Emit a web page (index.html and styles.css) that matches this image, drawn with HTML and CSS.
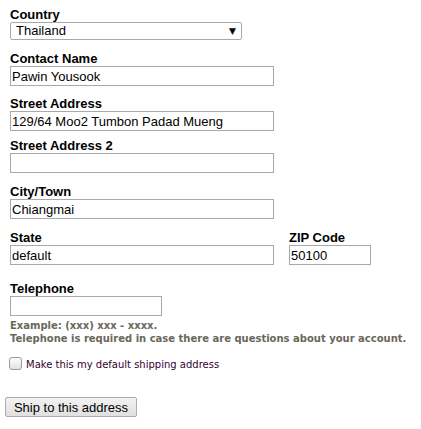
FILE: index.html
```html
<!DOCTYPE html>
<html>
<head>
<meta charset="utf-8">
<link rel="stylesheet" href="styles.css">
</head>
<body>
<form class="form">
  <div class="field">
    <label class="lbl">Country</label>
    <div class="select"><span>Thailand</span><span class="arrow">&#9660;</span></div>
  </div>
  <div class="field f-contact">
    <label class="lbl">Contact Name</label>
    <input class="txt" type="text" value="Pawin Yousook">
  </div>
  <div class="field f-street">
    <label class="lbl">Street Address</label>
    <input class="txt" type="text" value="129/64 Moo2 Tumbon Padad Mueng">
  </div>
  <div class="field f-street2">
    <label class="lbl">Street Address 2</label>
    <input class="txt" type="text" value="">
  </div>
  <div class="field f-city">
    <label class="lbl">City/Town</label>
    <input class="txt" type="text" value="Chiangmai">
  </div>
  <div class="row f-state">
    <div class="col">
      <label class="lbl">State</label>
      <input class="txt" type="text" value="default">
    </div>
    <div class="col">
      <label class="lbl">ZIP Code</label>
      <input class="txt zip" type="text" value="50100">
    </div>
  </div>
  <div class="field f-tel">
    <label class="lbl">Telephone</label>
    <input class="txt tel" type="text" value="">
    <p class="hint">Example: (xxx) xxx - xxxx.<br>Telephone is required in case there are questions about your account.</p>
  </div>
  <label class="check"><span class="box"></span><span class="check-text">Make this my default shipping address</span></label>
  <div class="actions">
    <button type="button" class="btn">Ship to this address</button>
  </div>
</form>
</body>
</html>
```
FILE: styles.css
```css
html, body {
  margin: 0;
  padding: 0;
  background: #fff;
}
.form {
  padding: 8px 0 0 5px;
  font-family: "Liberation Sans", Arial, sans-serif;
  color: #000;
}
.field {
  padding-left: 5px;
}
.lbl {
  display: block;
  font-weight: bold;
  font-size: 13px;
  line-height: 14px;
  height: 14px;
  color: #000;
}
.select {
  box-sizing: border-box;
  width: 232px;
  height: 18px;
  border: 1px solid #a9a9a9;
  border-radius: 2px;
  display: flex;
  align-items: center;
  justify-content: space-between;
  padding: 0 5px 0 5px;
  font-size: 13px;
  line-height: 16px;
  color: #000;
}
.arrow {
  font-family: "DejaVu Sans", sans-serif;
  font-size: 9px;
  line-height: 10px;
  color: #000;
}
.txt {
  display: block;
  box-sizing: border-box;
  width: 264px;
  height: 20px;
  margin: 0;
  border: 1px solid #a9a9a9;
  padding: 0 1px;
  font-family: "Liberation Sans", Arial, sans-serif;
  font-size: 13px;
  color: #000;
  background: #fff;
  outline: none;
}
.f-contact { margin-top: 12px; }
.f-street { margin-top: 11px; }
.f-street2 { margin-top: 8px; }
.f-city { margin-top: 12px; }
.row {
  display: flex;
  gap: 15px;
  margin-top: 12px;
  padding-left: 5px;
}
.zip { width: 82px; }
.f-tel { margin-top: 17px; }
.tel { width: 152px; }
.hint {
  margin: 3px 0 0;
  font-family: "DejaVu Sans", Verdana, sans-serif;
  font-weight: bold;
  font-size: 10px;
  line-height: 13px;
  color: #68685a;
}
.check {
  display: flex;
  align-items: flex-start;
  gap: 4px;
  margin-top: 12px;
  padding-left: 4px;
}
.box {
  box-sizing: border-box;
  width: 13px;
  height: 13px;
  border: 1px solid #9a9a9a;
  border-radius: 3px;
  background: linear-gradient(#fdfdfd, #e2e2e2);
}
.check-text {
  font-family: "DejaVu Sans", Verdana, sans-serif;
  font-size: 10px;
  line-height: 14px;
  color: #330033;
  padding-top: 1px;
}
.actions {
  margin-top: 25px;
}
.btn {
  box-sizing: border-box;
  width: 132px;
  height: 20px;
  padding: 0;
  border: 1px solid #acacac;
  border-radius: 2px;
  background: linear-gradient(#f2f2f2, #e0e0e0);
  font-family: "Liberation Sans", Arial, sans-serif;
  font-size: 13px;
  color: #000;
}
```
